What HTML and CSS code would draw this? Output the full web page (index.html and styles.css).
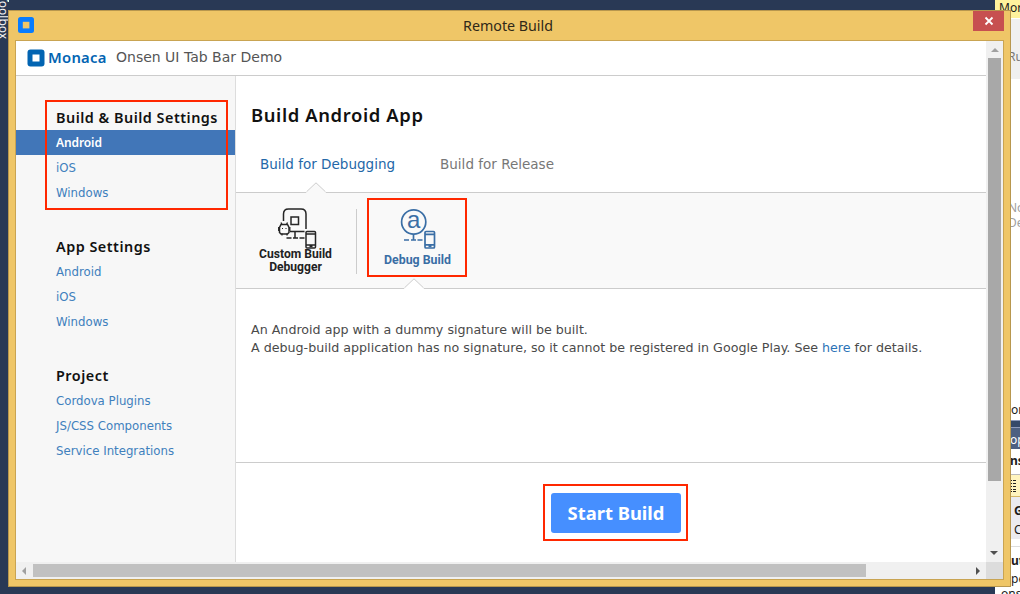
FILE: index.html
```html
<!DOCTYPE html>
<html lang="en">
<head>
<meta charset="utf-8">
<title>Remote Build</title>
<link rel="stylesheet" href="styles.css">
</head>
<body>
<div class="desktop">
  <div class="toolbox"><span>Toolbox</span></div>
  <div class="tool-edge"></div>
  <div class="ide">
    <div class="ide-row ide-tab">Mor</div>
    <div class="ide-row ide-run">Ru</div>
    <div class="ide-row ide-empty"><p>No</p><p>De</p></div>
    <div class="ide-row ide-error">or</div>
    <div class="ide-row ide-gap"></div>
    <div class="ide-row ide-title">op</div>
    <div class="ide-row ide-name">ns</div>
    <div class="ide-row ide-tools"><svg width="8" height="13" viewBox="0 0 8 13"><path d="M0 1.500h1M2 1.500h3M0 4.500h1M2 4.500h3M0 7.500h1M2 7.500h3M0 10.500h1M2 10.500h3M0 12.500h1M2 12.500h3" stroke="#222"/></svg></div>
    <div class="ide-row ide-grid"><p class="strong">G</p><p>C</p></div>
    <div class="ide-row ide-out"><p class="strong">ut</p><p>pe</p><p class="cut">ons</p></div>
  </div>

  <main class="window">
    <div class="titlebar">
      <svg class="app-icon" width="16" height="16" viewBox="0 0 16 16"><rect width="16" height="16" rx="2.5" fill="#087cff"/><rect x="4.800" y="4.800" width="6.600" height="6.600" fill="#efc667"/></svg>
      <span class="caption">Remote Build</span>
      <span class="close"><svg width="10" height="10" viewBox="0 0 10 10"><path d="M1.5 1.5l7 7M8.500 1.500l-7 7" stroke="#fff" stroke-width="1.8"/></svg></span>
    </div>
    <div class="client">
      <div class="page">
        <header class="header">
          <svg class="logo" width="18" height="18" viewBox="0 0 18 18"><rect x=".5" y=".5" width="17" height="17" rx="3" fill="#0264b2"/><rect x="5.500" y="5.500" width="7" height="7" fill="#fff"/></svg>
          <span class="brand">Monaca</span>
          <span class="project">Onsen UI Tab Bar Demo</span>
        </header>
        <div class="columns">
          <nav class="sidebar">
            <section><h2>Build &amp; Build Settings</h2><a class="active">Android</a><a>iOS</a><a>Windows</a></section>
            <section><h2>App Settings</h2><a>Android</a><a>iOS</a><a>Windows</a></section>
            <section><h2>Project</h2><a>Cordova Plugins</a><a>JS/CSS Components</a><a>Service Integrations</a></section>
          </nav>
          <div class="main">
            <h1>Build Android App</h1>
            <div class="tabs"><span class="tab current">Build for Debugging</span><span class="tab">Build for Release</span>
              <svg class="notch notch-tab" width="20" height="11" viewBox="0 0 20 11"><path d="M0 10.500L1 9.500 10 .8 19 9.500 20 10.500V11H0z" fill="#f9f9f9"/><path d="M.5 9.800L10 .8l9.500 9" fill="none" stroke="#ccc"/></svg>
            </div>
            <div class="types">
              <div class="type custom">
                <svg width="42" height="42" viewBox="0 0 42 42" fill="none" stroke="#262626" stroke-width="1.500">
                  <path d="M7.500 14V7q0-5 5-5H25q5 0 5 5v15M28.500 24.500H14"/>
                  <path d="M15 10h7.500v7.500H15z"/>
                  <path d="M5 17.500h6.500l1.500 3v5l-1.500 1.500H5L3.500 25.500v-5z"/><path d="M2.700 20v4M13.800 20v4M6 26.500v2M11 26.500v2M5 15.500l1 2M11.500 15.500l-1 2" stroke-width="1.300"/><path d="M6 21.500h1M9.500 21.500h1" stroke-width="1.200"/>
                  <path d="M19 25v5.500M10.500 31h5M17 31h5M23.500 31h5"/>
                  <rect x="30" y="24.500" width="9.500" height="16.500" rx="1"/><path d="M30 27h9.500M30 38h9.500M33.500 39.500h3"/>
                </svg>
                <span>Custom Build<br>Debugger</span>
              </div>
              <div class="rule"></div>
              <div class="type debug">
                <svg width="42" height="42" viewBox="0 0 42 42" fill="none" stroke="#3a6ea5" stroke-width="1.700">
                  <circle cx="17.700" cy="14" r="12.100"/>
                  <text x="17.700" y="20" text-anchor="middle">a</text>
                  <path d="M17.500 26v5.500M8 32h5M15 32h5M21.500 32h5"/>
                  <rect x="29" y="23.500" width="9.500" height="16.500" rx="1"/><path d="M29 26.300h9.500M29 36.800h9.500M32.500 38.500h3"/>
                </svg>
                <span>Debug Build</span>
              </div>
              <svg class="notch notch-type" width="20" height="11" viewBox="0 0 20 11"><path d="M0 10.500L10 .8l10 9.700V11H0z" fill="#fff"/><path d="M.5 9.800L10 .8l9.500 9" fill="none" stroke="#ccc"/></svg>
            </div>
            <div class="description"><p>An Android app with a dummy signature will be built.</p><p>A debug-build application has no signature, so it cannot be registered in Google Play. See <a>here</a> for details.</p></div>
            <div class="actions"><button>Start Build</button></div>
          </div>
        </div>
      </div>
      <div class="vbar"><i class="up"></i><div class="vthumb"></div><i class="down"></i></div>
      <div class="hbar"><i class="left"></i><div class="hthumb"></div><i class="right"></i></div>
      <div class="corner"></div>
    </div>
  </main>
  <div class="mark mark-menu"></div>
  <div class="mark mark-type"></div>
  <div class="mark mark-start"></div>
</div>
</body>
</html>
```
FILE: styles.css
```css
* { box-sizing: border-box; }
body, h1, h2, p { margin: 0; }
.desktop { position: relative; width: 1020px; height: 594px; overflow: hidden; background: #293955; font-family: "DejaVu Sans", sans-serif; }

.toolbox { position: absolute; left: -2px; top: -2px; width: 10px; height: 44px; writing-mode: vertical-rl; font: 12px/10px "Noto Sans", sans-serif; color: #f2f2f2; white-space: nowrap; }
.toolbox span { display: block; margin-top: -3px; }
.tool-edge { position: absolute; left: 8px; top: 0; width: 1px; height: 2px; background: #dfe; }

.ide { position: absolute; left: 995px; top: 0; width: 25px; height: 594px; display: flex; flex-direction: column; background: #fff; font: 12px/14px "Noto Sans", sans-serif; color: #1b1b1b; overflow: hidden; }
.ide-row { flex: none; padding-left: 16px; overflow: hidden; white-space: nowrap; }
.ide-tab { height: 18px; padding-left: 4px; line-height: 16px; background: #fff29d; }
.ide-run { height: 61px; padding: 31px 0 0 13px; border-top: 1px solid #fff; background: #f0f0f0; color: #777; }
.ide-empty { height: 319px; padding: 121px 0 0 13px; line-height: 15px; color: #a0a0a0; }
.ide-error { height: 22px; padding-top: 5px; }
.ide-gap { height: 7px; background: #35496a; border-top: 1px solid #8e9bbc; }
.ide-title { height: 22px; padding-left: 15px; line-height: 23px; background: #4d6082; border-top: 1px solid #8e9bbc; color: #fff; }
.ide-name { height: 26px; padding-left: 15px; line-height: 24px; font-weight: 700; border-bottom: 1px solid #bbb; }
.ide-tools { height: 22px; padding: 4px 0 0 16px; background: #fff4bf; border-bottom: 1px solid #d5b867; }
.ide-grid { height: 42px; padding: 4px 0 0 19px; line-height: 19px; background: #ebebf0; }
.ide-out { height: 55px; padding-top: 13px; line-height: 18px; background: linear-gradient(#fff 7px, #ddd 7px, #ddd 8px, #fff 8px); }
.ide-out .cut { margin: -3px 0 0 -10px; }
.strong { font-weight: 700; }

.window { position: absolute; left: 8px; top: 10px; width: 1003px; height: 577px; display: flex; flex-direction: column; padding: 0 6px 6px; background: #efc667; border: 1px solid #b8974e; }
.titlebar { height: 29px; display: flex; align-items: center; padding-left: 3px; }
.app-icon { display: block; margin-top: -1px; }
.caption { flex: 1; margin-right: -9px; text-align: center; font: 14.260px/28px "Noto Sans", sans-serif; color: #302818; }
.close { align-self: flex-start; width: 31px; height: 20px; display: flex; align-items: center; justify-content: center; background: #c75050; }
.client { flex: 1; min-height: 0; display: grid; grid-template: 521px 17px / 970px 17px; border: 1px solid #c9a452; background: #fff; }
.page { display: flex; flex-direction: column; min-height: 0; }
.header { height: 35px; display: flex; align-items: center; padding: 0 0 1px 11px; border-bottom: 1px solid #ccc; }
.logo { flex: none; }
.brand { width: 68px; margin: -1px 0 0 3px; font: 600 14.800px/20px "Noto Sans", sans-serif; letter-spacing: .25px; color: #0264b2; }
.project { margin-top: -1px; font-size: 14px; color: #555; }
.columns { flex: 1; display: flex; min-height: 0; }
.sidebar { width: 220px; padding-top: 29px; background: #f7f7f7; border-right: 1px solid #ddd; }
.sidebar section { height: 129px; }
.sidebar h2 { height: 25px; padding-left: 40px; font: 600 14.400px/26px "Noto Sans", sans-serif; letter-spacing: .5px; color: #111; white-space: nowrap; }
.sidebar a { display: block; height: 25px; padding-left: 40px; font-size: 11.750px; line-height: 27px; color: #4080bd; }
.sidebar .active { background: #4176b8; color: #fff; font: 600 12px/26px "Noto Sans", sans-serif; letter-spacing: -.1px; }

.main { flex: 1; min-width: 0; display: flex; flex-direction: column; }
h1 { height: 62px; padding: 25px 0 0 15px; font: 600 18.400px/28px "Noto Sans", sans-serif; letter-spacing: .62px; color: #111; }
.tabs { position: relative; height: 55px; display: flex; gap: 45px; padding-left: 24px; border-bottom: 1px solid #ccc; }
.tab { line-height: 53px; font-size: 13.520px; color: #777; }
.tab.current { color: #2468a8; }
.notch { position: absolute; display: block; }
.notch-tab { left: 70px; bottom: -1px; }
.types { position: relative; height: 96px; display: flex; background: #f9f9f9; border-bottom: 1px solid #ccc; }
.type { display: flex; flex-direction: column; align-items: center; padding-top: 14px; font: 700 12.100px/13px Roboto, sans-serif; text-align: center; color: #222; }
.type svg { display: block; flex: none; }
.custom { width: 119px; }
.custom svg { margin-left: 2px; }
.custom span { margin-top: -1px; }
.rule { width: 1px; height: 65px; margin: 16px 0 0 1px; background: #ccc; }
.debug { width: 121px; font-size: 12.350px; color: #3a6ea5; }
.debug svg { margin: 1px 2px 0 0; }
.debug text { font: 24px "Liberation Sans", sans-serif; fill: #3a6ea5; stroke: none; }
.debug span { margin-top: 4px; }
.notch-type { left: 168px; bottom: -1px; }
.description { height: 174px; padding: 32px 0 0 15px; border-bottom: 1px solid #ccc; font-size: 12.670px; line-height: 18px; color: #4a4a4a; white-space: nowrap; }
.description a { color: #2b73b7; }
.actions { flex: 1; display: flex; justify-content: center; padding: 30px 0 0 10px; }
button { width: 130px; height: 40px; padding: 0 0 2px; border: 0; border-radius: 3px; background: #468fff; color: #fff; font: 700 18.400px/37px "Noto Sans", sans-serif; }

.vbar { display: flex; flex-direction: column; align-items: center; background: #f0f0f0; }
.vthumb { width: 13px; height: 423px; background: #a8a8a8; }
.hbar { display: flex; align-items: center; background: #f0f0f0; }
.hthumb { width: 833px; height: 13px; background: #c1c1c1; }
.corner { background: #dcdcdc; }
.vbar i, .hbar i { width: 0; height: 0; border: 4px solid transparent; }
.vbar .up { margin: 3px 0 6px; border-bottom-color: #a0a0a0; }
.vbar .down { margin: 70px 1px 0 0; border-top-color: #505050; }
.hbar .left { margin: 0 7px 0 2px; border-right-color: #a0a0a0; }
.hbar .right { margin-left: 110px; border-left-color: #505050; }

.mark { position: absolute; border: 2px solid #ff2800; }
.mark-menu { left: 45px; top: 100px; width: 183px; height: 110px; }
.mark-type { left: 367px; top: 198px; width: 100px; height: 79px; }
.mark-start { left: 543px; top: 484px; width: 145px; height: 57px; }
```
